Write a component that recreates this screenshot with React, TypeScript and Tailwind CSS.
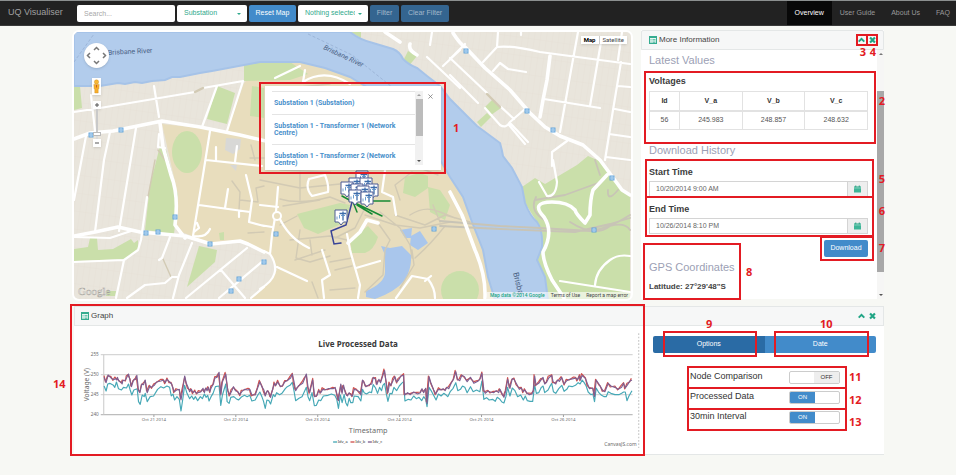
import React, { useState } from "react";

const RIVER =
  "M74 32 L350 32 Q360 40 373 43 L393 49 Q400 52 403 59 Q409 65 417 68 L427 76 L440 86 L450 99 L462 111 L477 126 L500 143 Q502 150 503 156 L512 168 L522 187 L525 203 Q530 216 537 222 Q543 230 542 247 L537 260 L545 277 L548 300 L495 300 L488 277 L483 250 L472 222 L463 197 L450 177 L442 163 L425 140 L400 112 L380 95 L365 86 L350 77 L325 68 L300 62 L275 62 L260 62 L244 65 L228 68 L212 71 L200 73 L190 75 L180 77 L172 77 L165 80 L152 81 L142 83 L135 82 L125 84 L118 83 L100 86 L74 86 Z";

const PARKS = [
  "M74 86 L80 86 L82 108 L74 110 Z",
  "M217 86 L235 93 L227 124 L207 119 Z",
  "M244 65 L262 62 L290 62 L308 74 L290 80 L244 81 Z",
  "M252 86 L264 88 L264 118 L250 116 Z",
  "M160 146 L166 150 L178 195 L174 234 L145 230 L150 185 Z",
  "M74 249 L88 247 L90 238 L97 238 L98 250 L113 249 L131 239 L134 243 L138 240 L138 250 L125 259 L74 261 Z",
  "M199 246 L217 250 L215 262 L187 287 Z",
  "M219 233 L224 232 L224 240 L220 240 Z",
  "M106 291 L116 291 L115 296 L106 296 Z",
  "M297 214 L340 203 L350 205 L346 222 L318 234 L304 228 Z",
  "M350 240 L368 226 L378 237 Q374 250 365 253 L352 253 Z",
  "M405 177 L420 173 L428 176 L428 188 L415 197 L403 193 Z",
  "M428 187 L440 190 L450 205 L445 220 L430 212 Z",
  "M522 187 L535 178 L545 184 L577 165 L588 156 L602 162 L612 180 L630 195 L630 299 L548 299 L545 277 L537 260 L542 247 L542 233 L537 222 L525 203 Z",
  "M493 99 L501 108 L491 115 L484 108 Z",
  "M477 122 L487 113 L491 117 L481 127 Z",
  "M401 65 L408 51 L417 56 L408 67 Z",
  "M350 32 L361 32 L361 38 Z",
];

const PATHS =
  "M297 216 L280 225 M280 199 Q300 205 330 197 L345 203 M283 206 L320 200 M300 165 L300 200 M260 180 L300 188 L340 184 M290 240 L330 236 L347 240 M295 260 L325 250 M300 230 L296 258 L310 262 L330 256 M310 240 L312 255 M330 262 L352 258 M335 270 L352 266 M330 290 L355 288 M312 282 L318 298 M365 215 L395 225 L420 228 L450 222 M380 212 L400 228 L410 245 L412 258 M395 215 L425 225 L445 215 L470 222 M410 215 Q425 205 440 212 L455 218 M378 223 L390 240 L385 250 L383 275 L365 292 M412 250 L414 265 L400 288 M445 226 Q430 245 415 258 M433 205 L440 222 M382 165 L420 168 L438 175 M412 172 L395 185 L400 200 M365 208 L355 228 L335 238 M232 181 L240 192 L239 210 M240 200 L258 202 L256 188 L264 186 M248 233 L264 232 M250 158 L264 158 M251 145 L255 160 M148 197 L155 160 M165 160 L158 150 M163 259 L171 277 M270 90 L330 84 M270 110 L330 120 L380 110 M280 170 L330 172";

const HIGHWAYS =
  "M440 221 L500 226 L540 228 L590 231 Q610 228 630 215 M440 226 L500 229 L575 232 L610 224 L630 218 M535 200 L565 195 L598 183 M595 160 L600 175 M608 190 Q607 203 618 190 M536 197 Q528 212 548 222 M570 222 Q595 238 610 226 Q625 222 630 230";

const ROADS =
  "M74 112 L100 108 L195 92 M203 88 L243 81 M154 86 L159 117 M91 95 L95 131 M217 86 L202 127 M243 81 L227 131 M86 136 L74 200 M110 132 L104 160 L95 232 M136 128 L119 231 M159 134 L158 147 L165 148 M210 131 L203 175 L193 236 M206 160 L262 166 M216 147 L216 160 M237 146 L235 162 M147 197 L141 240 L138 250 L124 260 L116 298 M74 262 L124 260 M74 237 L110 238 L131 231 M170 237 L162 258 L159 260 M192 243 L179 275 L173 298 M127 298 L145 285 L165 283 L172 277 L177 277 M247 248 L186 298 M264 260 L219 298 M264 287 L251 298 M221 270 L245 298 M199 205 L250 212 M228 189 L225 208 M239 212 L239 217 M210 229 Q206 238 194 236 M197 223 L199 228 L194 232 M246 175 L252 200 L249 222 L264 226 M260 205 L278 207 M278 187 L276 212 L272 235 L270 254 M278 215 Q288 238 309 248 M260 225 L272 227 M264 251 L270 254 Q284 275 260 289 M277 267 L307 281 M309 179 L325 175 Q329 185 328 192 L312 196 Q305 188 309 179 M322 250 L330 275 L322 280 L324 298 M347 234 L350 250 L360 285 L358 298 M356 268 L380 261 M386 163 L382 192 L393 197 L396 215 M396 298 L412 276 L428 279 Q435 288 435 298 M425 281 L431 276 M450 59 L465 44 M483 62 L497 47 Q510 45 540 52 L630 64 M497 47 L498 32 M450 58 L487 93 M450 75 L478 103 M485 108 L500 125 Q506 129 510 122 L525 109 M501 107 L514 119 M509 125 L525 144 M511 124 L528 142 M493 71 L500 63 L508 69 L526 72 M578 32 L572 65 L560 132 M544 99 L600 108 M601 42 L590 106 M621 62 L613 110 L605 160 M618 86 L630 87 M615 109 L630 112 M609 134 L630 137 M606 157 L630 160 M552 166 L552 152 L567 141 M618 60 L622 32 M427 57 L460 88 M443 66 L460 50 M432 32 L430 45 M521 32 L521 35 M553 160 L557 182 Q556 197 547 196 L539 182 M560 281 L630 292 M595 285 Q596 270 610 260 Q618 254 630 256 M275 78 L300 66 M305 70 L303 82 Q325 68 350 84";

const MAIN_ROADS =
  "M74 139 L90 133 L113 131 L162 121 L200 127 L240 135 L270 142 M160 123 L163 147 L171 175 Q179 195 175 225 L185 238 M74 236 L95 232 L118 227 L140 232 L185 236 L211 244 L240 241 L248 244 L264 252 M385 32 L400 42 M410 44 Q408 50 417 55 M453 33 Q460 44 465 47 L485 68 L510 90 L530 113 L545 127 L560 136 L583 145 L600 160 L622 190 L630 195 M550 56 L547 80 L543 100 L540 117 M607 175 L593 190 Q590 200 590 215 L585 223 Q576 214 575 210 Q568 202 552 202 Q530 202 544 217 Q554 232 543 252 Q543 262 552 280 L564 298 M450 192 L462 215 L475 250 Q486 275 485 298 M348 243 L360 232 L367 220 L378 223";

const STOPS = [
  [91, 135], [121, 130], [175, 217], [146, 233], [158, 232], [210, 244], [239, 279], [231, 291],
  [276, 234], [264, 262], [434, 229], [466, 51], [527, 111], [553, 130], [612, 178], [594, 230],
];

const MARKERS = [
  [362, 177], [355, 184], [347, 188], [366, 184], [357, 190], [372, 190], [363, 192], [355, 196], [367, 198], [341, 216],
];

function MapCanvas() {
  return (
    <svg
      viewBox="74 32 557 267"
      preserveAspectRatio="none"
      className="block h-full w-full"
      role="img"
      aria-label="Campus map"
    >
      <defs>
        <pattern id="lots" width="6" height="18" patternUnits="userSpaceOnUse" patternTransform="rotate(8)">
          <path d="M0 0V18M0 0H6" stroke="#e2ded4" strokeWidth="0.6" fill="none" />
        </pattern>
      </defs>
      <rect x="74" y="32" width="557" height="267" fill="#e9e5dc" />
      <rect x="74" y="32" width="557" height="267" fill="url(#lots)" />
      <path
        d="M162 124 L227 131 L244 83 L264 62 L330 60 L460 150 L498 299 L249 299 L262 290 L277 270 L270 255 L246 242 L211 243 L176 230 L178 195 Z"
        fill="#e8ddbd"
      />
      {PARKS.map((d) => (
        <path key={d} d={d} fill="#cadfaa" />
      ))}
      <ellipse cx="187" cy="152" rx="15" ry="21" fill="#cadfaa" />
      <circle cx="460" cy="290" r="19" fill="#cadfaa" />
      <path d={RIVER} fill="#b2ccec" stroke="#a6c3e8" strokeWidth="2" />
      <path
        d="M381 246 L390 248 L402 246 L411 255 Q412 268 405 280 Q395 292 375 299 L366 297 L366 291 Q385 283 385 272 L385 255 Z M400 230 L412 228 L411 238 L405 238 Z M411 236 L420 231 L428 243 L418 250 L410 245 Z"
        fill="#a9c6ec"
      />
      <path d="M226 138 L241 139 L240 149 L233 154 L225 150 Z M230 165 L237 165 L236 171 Z" fill="#d8d8d6" />
      <path d="M74 62 L94 34 M308 34 L352 55 L392 87" stroke="#93acd0" strokeWidth="0.7" strokeDasharray="3 2" fill="none" />
      <g fill="none" strokeLinejoin="round" strokeLinecap="round">
        <path d={PATHS} stroke="#d2cab4" strokeWidth="1.4" />
        <path d={HIGHWAYS} stroke="#c8c4b6" strokeWidth="1.8" />
        <path d={ROADS} stroke="#ffffff" strokeWidth="2.2" />
        <path d={MAIN_ROADS} stroke="#ffffff" strokeWidth="3.6" />
        <circle cx="277" cy="216" r="4" stroke="#ffffff" strokeWidth="2" fill="#e8ddbd" />
        <path d="M195 92 L203 88 M487 94 L500 107" stroke="#d2cab4" strokeWidth="2.4" />
      </g>
      {STOPS.map(([x, y]) => (
        <g key={`${x}-${y}`}>
          <rect x={x - 2} y={y - 2} width="4" height="4" fill="#cfe4f7" stroke="#5a9fd8" strokeWidth="0.9" />
          <path d={`M${x - 1.4} ${y}H${x + 1.4}`} stroke="#5a9fd8" strokeWidth="0.8" />
        </g>
      ))}
      <g fontFamily='Roboto, "Noto Sans", sans-serif' fontSize="7" fill="#4b6285">
        <text x="108" y="55" transform="rotate(-3 108 55)">Brisbane River</text>
        <text x="323" y="49" transform="rotate(25 323 49)" fontStyle="italic">Brisbane River</text>
        <text x="513" y="273" transform="rotate(76 513 273)" fontSize="8">Brisba</text>
      </g>
      <g fill="none" strokeLinecap="round" strokeWidth="1.5">
        <path d="M342 196 L353 202 L382 216 M357 205 L372 214 M353 202 L357 212 M370 201 L390 201" stroke="#178a35" />
        <path d="M352 202 L346 225 L331 231 L334 244 L341 243" stroke="#3a4598" />
      </g>
      {MARKERS.map(([x, y]) => (
        <g key={`${x}-${y}`} transform={`translate(${x} ${y})`}>
          <path d="M-6 -6 H6 V6 H2.500 L0 9 L-2.500 6 H-6 Z" fill="#fff" stroke="#4c5b93" strokeWidth="1" strokeLinejoin="round" />
          <path d="M2 -4.500 V4.500 M-1.500 -2.500 H5" stroke="#3c6cab" strokeWidth="1.300" fill="none" />
          <path d="M0 -0.500 H4 M-1.500 -1 V2.500 M-4 0.500 V3.500" stroke="#5e93c8" strokeWidth="0.900" fill="none" />
        </g>
      ))}
      <text x="78" y="295" fontFamily='"Liberation Serif", serif' fontSize="11" fill="#f2f2f0" stroke="#a3a19a" strokeWidth="0.4">
        Google
      </text>
    </svg>
  );
}

/* Numbered call-out: a red frame with its number beside it */
function Callout({ n, frame, label }: { n: number; frame: string; label: string }) {
  return (
    <>
      <div className={`pointer-events-none absolute z-20 border-2 border-[#e31b23] ${frame}`} />
      <span
        className={`pointer-events-none absolute z-20 font-['Open_Sans','Noto_Sans',sans-serif] text-[11px] leading-[12px] font-bold text-[#e31b23] ${label}`}
      >
        {n}
      </span>
    </>
  );
}

function ListIcon() {
  return (
    <svg viewBox="0 0 8 8" className="h-[8px] w-[8px] shrink-0">
      <rect x="0.5" y="0.5" width="7" height="7" fill="#e6f6f1" stroke="#35ac90" />
      <path d="M0 1H8" stroke="#35ac90" strokeWidth="2" />
      <path d="M1.500 3.500H2.500M3.500 3.500H6.500M1.500 5H2.500M3.500 5H6.500M1.500 6.500H2.500M3.500 6.500H6.500" stroke="#35ac90" strokeWidth="0.7" />
    </svg>
  );
}

function PanelTools() {
  return (
    <div className="ml-auto flex items-center gap-[4px]">
      <button aria-label="Collapse" className="block">
        <svg viewBox="0 0 8 8" className="h-[8px] w-[7px]">
          <path d="M0.800 5.800 L4 2.600 L7.200 5.800" fill="none" stroke="#20a585" strokeWidth="2.200" />
        </svg>
      </button>
      <button aria-label="Close" className="block">
        <svg viewBox="0 0 8 8" className="h-[8px] w-[7px]">
          <path d="M1.200 1.200 L6.800 6.800 M6.800 1.200 L1.200 6.800" fill="none" stroke="#20a585" strokeWidth="2.500" />
        </svg>
      </button>
    </div>
  );
}

function PanelHeader({ title, className }: { title?: string; className: string }) {
  return (
    <header className={`flex h-[20px] items-center gap-[2px] border border-[#e4e7e7] bg-[#f6f7f7] ${className}`}>
      {title && <ListIcon />}
      {title && <h1 className="text-[8px] leading-[10px] text-[#444]">{title}</h1>}
      <PanelTools />
    </header>
  );
}

function NavSelect({ label, value, className }: { label: string; value: string; className: string }) {
  return (
    <div className={`relative ${className}`}>
      <select
        aria-label={label}
        className="h-[17px] w-full appearance-none overflow-hidden rounded-[2px] bg-white pr-[13px] pl-[7px] text-[7px] text-[#2fa98c]"
      >
        <option>{value}</option>
      </select>
      <span className="pointer-events-none absolute top-[8px] right-[6px] border-x-2 border-t-2 border-x-transparent border-t-[#2fa98c]" />
    </div>
  );
}

function Navbar() {
  const links = ["Overview", "User Guide", "About Us", "FAQ"];
  return (
    <nav className="flex h-[26px] items-stretch border-t border-b border-t-[#8c9090] border-b-[#3a3a3a] bg-[#222] text-[7px]">
      <a href="#home" className="flex w-[77px] items-center pl-[8px] text-[9px] text-[#a0a0a0]">UQ Visualiser</a>
      <form className="flex items-center gap-[2px]" onSubmit={(e) => e.preventDefault()}>
        <input
          aria-label="Search"
          placeholder="Search..."
          className="h-[17px] w-[98px] rounded-[2px] bg-white px-[7px] text-[7px] placeholder:text-[#a8a8a8]"
        />
        <NavSelect label="Node type" value="Substation" className="w-[70px]" />
        <button className="h-[17px] w-[47px] rounded-[2px] bg-[#428bca] text-white">Reset Map</button>
        <NavSelect label="Selected nodes" value="Nothing selected" className="w-[70px]" />
        <button className="h-[17px] w-[29px] rounded-[2px] bg-[#346590] text-[#a3b8ca]">Filter</button>
        <button className="h-[17px] w-[48px] rounded-[2px] bg-[#346590] text-[#a3b8ca]">Clear Filter</button>
      </form>
      <div className="ml-auto flex">
        {links.map((l, i) => (
          <a
            key={l}
            href={`#${l}`}
            className={`flex items-center px-[8px] last:pr-[6px] ${i === 0 ? "bg-[#080808] text-white" : "text-[#999]"}`}
          >
            {l}
          </a>
        ))}
      </div>
    </nav>
  );
}

function MapPopup() {
  const items = [
    "Substation 1 (Substation)",
    "Substation 1 - Transformer 1 (Network Centre)",
    "Substation 1 - Transformer 2 (Network Centre)",
  ];
  return (
    <div className="absolute top-[54px] left-[191px] flex h-[84px] w-[176px] items-start bg-white pt-[5px] pl-[7px] font-['Roboto',sans-serif] shadow">
      <ul className="h-[76px] flex-1 overflow-hidden">
        {items.map((t) => (
          <li key={t} className="border-t border-[#e4e4e4] px-[2px] pt-[8px] pb-[7px] text-[7px] leading-[7px] font-bold">
            <a href="#node" className="text-[#4a90cb]">{t}</a>
          </li>
        ))}
      </ul>
      <div className="flex h-[74px] w-[8px] flex-col items-center justify-between bg-[#f1f1f1] py-[3px]">
        <span className="border-x-2 border-b-2 border-x-transparent border-b-[#a0a0a0]" />
        <span className="mt-[3px] h-[37px] w-[7px] bg-[#bcbcbc]" />
        <span className="mt-auto border-x-2 border-t-2 border-x-transparent border-t-[#505050]" />
      </div>
      <button aria-label="Close popup" className="mr-[8px] ml-[5px] mt-[3px]">
        <svg viewBox="0 0 6 6" className="h-[5px] w-[5px]">
          <path d="M0.500 0.500 L5.500 5.500 M5.500 0.500 L0.500 5.500" stroke="#777" strokeWidth="0.900" />
        </svg>
      </button>
    </div>
  );
}

function MapControls() {
  return (
    <div className="absolute top-[11px] left-[10px] flex w-[25px] flex-col items-center">
      <button aria-label="Pan" className="h-[25px] w-[25px] rounded-full bg-white shadow">
        <svg viewBox="0 0 25 25" className="h-full w-full">
          <path d="M10 7 L12.500 4.500 L15 7 M10 18 L12.500 20.500 L15 18 M6 10 L3.500 12.500 L6 15 M19 10 L21.500 12.500 L19 15" fill="none" stroke="#777" strokeWidth="1.500" />
        </svg>
      </button>
      <button aria-label="Street view" className="mt-[10px] h-[17px] w-[9px] bg-white shadow">
        <svg viewBox="0 0 9 17" className="h-full w-full">
          <circle cx="4.500" cy="4" r="2.200" fill="#f7b733" stroke="#c98a24" strokeWidth="0.400" />
          <path d="M1.800 6.500H7.200L6.800 11H6.200V15H2.800V11H2.200Z" fill="#f7ae2a" stroke="#c98a24" strokeWidth="0.400" />
          <path d="M4.500 7V9.500" stroke="#c04a18" strokeWidth="0.800" />
        </svg>
      </button>
      <button aria-label="Zoom in" className="mt-[6px] h-[8px] w-[8px] bg-white shadow">
        <svg viewBox="0 0 8 8"><path d="M4 2V6M2 4H6" stroke="#555" /></svg>
      </button>
      <div className="flex h-[30px] w-[8px] flex-col items-center justify-end">
        <div className="w-[2px] flex-1 border border-[#c9c9c9] bg-white" />
        <div className="h-[4px] w-[8px] border border-[#bbb] bg-white" />
        <div className="h-[3px] w-[2px] bg-[#ddd]" />
      </div>
      <button aria-label="Zoom out" className="h-[8px] w-[8px] bg-white shadow">
        <svg viewBox="0 0 8 8"><path d="M2 4H6" stroke="#555" /></svg>
      </button>
    </div>
  );
}

function MapPanel() {
  return (
    <section className="relative mt-[1px] h-[267px] min-w-0 flex-1">
      <div className="h-full overflow-hidden rounded-[5px] ring-2 ring-white">
        <MapCanvas />
      </div>
      <MapControls />
      <div className="absolute top-[4px] right-[4px] flex h-[8px] bg-white font-['Roboto',sans-serif] text-[6px] leading-[8px] text-[#444] shadow">
        <button className="border-r border-[#ccc] px-[3px] font-bold text-black">Map</button>
        <button className="px-[3px]">Satellite</button>
      </div>
      <div className="absolute right-0 bottom-0 flex h-[7px] gap-[6px] bg-white/60 px-[3px] font-['Roboto',sans-serif] text-[5px] leading-[7px] text-[#444]">
        <a href="#data" className="font-medium text-[#20a585]">Map data ©2014 Google</a>
        <a href="#terms">Terms of Use</a>
        <a href="#report">Report a map error</a>
      </div>
      <MapPopup />
      <Callout n={1} frame="top-[50px] left-[185px] h-[92px] w-[187px]" label="top-[90px] left-[379px]" />
    </section>
  );
}

function DateField({ id, label, value, className }: { id: string; label: string; value: string; className: string }) {
  return (
    <div className={className}>
      <label htmlFor={id} className="block text-[9px] leading-[12px] font-bold text-[#3c3c3c]">{label}</label>
      <div className="mt-[3px] flex h-[16px] border border-[#d4d4d4]">
        <input id={id} defaultValue={value} className="min-w-0 flex-1 bg-white px-[6px] text-[7px] text-[#666]" />
        <button aria-label={`Pick ${label}`} className="flex w-[20px] items-center justify-center border-l border-[#d4d4d4] bg-[#eee]">
          <svg viewBox="0 0 8 8" className="h-[8px] w-[7px]">
            <path d="M0 1H8V8H0Z" fill="#3db597" />
            <path d="M0 2.800H8" stroke="#d9f0ea" strokeWidth="0.600" />
            <path d="M2 0V2M6 0V2" stroke="#249478" />
          </svg>
        </button>
      </div>
    </div>
  );
}

function InfoPanel() {
  const heading = "text-[11px] leading-[14px] text-[#9c9fb5]";
  return (
    <aside className="relative -mt-[1px] w-[243px] shrink-0 bg-white">
      <PanelHeader title="More Information" className="rounded-t-[2px] pr-[7px] pl-[7px]" />
      <div className="flex h-[249px]">
        <div className="min-w-0 flex-1 overflow-hidden pt-[3px] pr-[9px] pl-[8px]">
          <h2 className={heading}>Latest Values</h2>
          <h3 className="mt-[8px] text-[9px] leading-[12px] font-bold text-[#3c3c3c]">Voltages</h3>
          <table className="mt-[4px] w-full table-fixed border-collapse text-center text-[7px] text-[#555]">
            <colgroup>
              <col className="w-[30px]" />
              <col />
              <col />
              <col />
            </colgroup>
            <thead>
              <tr className="h-[19px] text-[#333]">
                {["Id", "V_a", "V_b", "V_c"].map((h) => (
                  <th key={h} className="border border-b-2 border-[#e2e2e2] p-0 font-bold">{h}</th>
                ))}
              </tr>
            </thead>
            <tbody>
              <tr className="h-[19px]">
                {["56", "245.983", "248.857", "248.632"].map((v) => (
                  <td key={v} className="border border-[#e2e2e2] p-0">{v}</td>
                ))}
              </tr>
            </tbody>
          </table>
          <h2 className={`mt-[13px] ${heading}`}>Download History</h2>
          <DateField id="start" label="Start Time" value="10/20/2014 9:00 AM" className="mt-[9px]" />
          <DateField id="end" label="End Time" value="10/26/2014 8:10 PM" className="mt-[6px]" />
          <button className="mt-[6px] ml-auto block h-[17px] w-[44px] rounded-[2px] bg-[#428bca] text-[7px] text-white">
            Download
          </button>
          <h2 className={`mt-[3px] ${heading}`}>GPS Coordinates</h2>
          <p className="mt-[8px] text-[8px] leading-[10px] font-bold text-[#444]">Latitude: 27°29'48"S</p>
        </div>
        <div className="flex w-[7px] flex-col items-center bg-[#f6f6f5] py-[3px]">
          <span className="border-x-2 border-b-2 border-x-transparent border-b-[#777]" />
          <span className="mt-[36px] h-[181px] w-[7px] bg-[#a8a8a8]" />
          <span className="mt-auto border-x-2 border-t-2 border-x-transparent border-t-[#555]" />
        </div>
      </div>
      <Callout n={3} frame="top-[4px] right-[16px] h-[12px] w-[12px]" label="top-[16px] right-[18px]" />
      <Callout n={4} frame="top-[4px] right-[6px] h-[12px] w-[12px]" label="top-[16px] right-[8px]" />
      <Callout n={2} frame="top-[41px] right-[8px] left-[3px] h-[73px]" label="top-[65px] right-[-1px]" />
      <Callout n={5} frame="top-[129px] right-[10px] left-[4px] h-[39px]" label="top-[143px] right-[-1px]" />
      <Callout n={6} frame="top-[166px] right-[10px] left-[4px] h-[41px]" label="top-[175px] right-[-1px]" />
      <Callout n={7} frame="top-[206px] right-[10px] h-[25px] w-[54px]" label="top-[212px] right-[-1px]" />
      <Callout n={8} frame="top-[213px] left-[2px] h-[57px] w-[98px]" label="top-[236px] left-[105px]" />
    </aside>
  );
}

const SERIES_C: number[][] = [
  [120,232],[126,248],[132,225],[140,233],[148,239],[154,236],[158,240],[160,232],[164,243],[170,246],[174,252],[176,242],[184,240],[188,232],[193,222],[198,243],[202,260],[208,240],[214,238],[218,226],[223,272],[227,278],[233,252],[238,254],[243,240],[249,278],[257,258],[262,262],[270,256],[277,246],[290,243],[298,240],[303,248],[308,238],[316,246],[322,252],[325,262],[330,275],[337,270],[345,268],[350,300],[355,270],[361,228],[366,250],[371,262],[376,275],[381,268],[386,278],[391,274],[398,280],[404,277],[409,276],[416,265],[420,278],[424,264],[428,272],[432,262],[436,275],[441,262],[447,252],[451,235],[458,232],[464,217],[469,285],[474,245],[484,222],[490,272],[496,285],[502,272],[507,260],[513,272],[520,275],[526,284],[532,275],[540,268],[550,270],[556,268],[562,285],[572,285],[580,262],[586,246],[592,260],[598,270],[602,288],[608,272],[613,278],[618,292],[625,264],[630,250],[634,256],[639,246],[648,260],[655,256],[660,246],[670,240],[678,234],[683,222],[688,245],[693,272],[701,258],[714,250],[719,238],[725,222],[730,262],[735,278],[744,240],[750,290],[757,286],[762,272],[768,278],[774,268],[780,270],[790,266],[806,266],[811,262],[816,280],[821,302],[828,252],[832,280],[836,255],[842,280],[848,288],[853,278],[858,285],[863,288],[868,268],[875,270],[885,276],[888,285],
  [893,240],[898,248],[903,260],[913,254],[921,252],[925,232],[932,238],[936,254],[942,238],[947,248],[954,226],[959,212],[964,250],[969,278],[974,250],[978,256],[985,240],[990,230],[995,246],[1001,240],[1008,228],[1016,226],[1019,285],[1028,278],[1036,284],[1046,276],[1058,282],[1066,278],[1071,266],[1076,278],[1082,265],[1086,310],[1092,230],[1098,250],[1106,270],[1112,282],[1120,268],[1128,270],[1134,266],[1140,272],[1145,262],[1151,266],[1158,250],[1166,236],[1172,215],[1177,238],[1184,242],[1190,226],[1198,230],[1206,245],[1216,232],[1226,250],[1238,244],[1245,236],[1250,220],[1256,270],[1260,280],[1268,273],[1276,276],[1286,278],[1293,272],[1300,278],[1304,268],[1310,280],[1316,292],[1322,270],[1327,238],[1334,265],[1341,236],[1346,238],[1354,252],[1362,268],[1368,264],[1374,275],[1379,270],[1384,278],[1392,284],[1400,282],[1404,270],[1408,228],[1412,255],[1420,250],[1428,238],[1433,232],[1438,252],[1444,246],[1450,234],[1459,226],[1463,245],[1471,252],[1476,240],[1482,244],[1489,232],[1496,252],[1504,242],[1513,238],[1524,236],[1532,234],[1536,240],[1542,228],[1545,240],[1550,226],[1560,236],[1566,252],[1572,266],[1582,264],[1587,290],[1592,240],[1600,252],[1606,262],[1612,272],[1618,275],[1628,250],[1636,258],[1648,262],[1658,268],[1668,262],[1674,250],[1679,264],[1686,254],[1692,244],[1699,240],
];

const SERIES_A: number[][] = [
  [120,258],[126,273],[131,252],[137,250],[148,256],[152,262],[157,246],[163,266],[172,270],[178,262],[187,264],[193,252],[198,270],[203,285],[209,270],[219,266],[223,305],[228,313],[234,285],[240,290],[243,280],[249,305],[258,290],[268,288],[280,268],[290,260],[298,264],[308,258],[316,262],[321,288],[326,282],[331,300],[338,290],[345,298],[350,333],[355,300],[361,256],[368,280],[376,296],[382,288],[388,298],[393,290],[400,302],[408,290],[414,296],[420,282],[425,292],[430,286],[434,303],[440,290],[446,280],[453,260],[464,258],[469,316],[474,285],[484,252],[488,305],[494,310],[499,292],[508,290],[515,296],[522,300],[532,290],[540,286],[548,290],[556,286],[562,303],[572,300],[580,285],[586,276],[592,290],[597,304],[602,325],[607,300],[613,302],[618,312],[626,284],[631,290],[636,278],[645,284],[652,280],[662,266],[668,260],[676,256],[683,247],[688,272],[693,302],[703,295],[712,290],[719,275],[725,262],[730,290],[735,302],[742,278],[749,317],[755,316],[762,300],[768,302],[776,288],[790,286],[800,282],[810,286],[816,298],[821,325],[827,285],[832,308],[838,284],[843,308],[848,318],[853,295],[858,308],[864,308],[868,288],[880,290],[888,303],
  [893,268],[898,278],[905,282],[914,276],[920,278],[925,254],[932,264],[938,280],[944,262],[950,272],[954,256],[959,250],[964,280],[969,304],[975,280],[981,282],[987,262],[995,272],[1003,258],[1010,250],[1016,245],[1020,303],[1030,298],[1038,300],[1046,288],[1054,296],[1062,292],[1070,302],[1076,290],[1082,298],[1086,320],[1092,262],[1100,275],[1108,290],[1113,300],[1120,282],[1128,288],[1136,280],[1144,286],[1148,290],[1156,274],[1164,265],[1172,248],[1178,272],[1186,268],[1192,258],[1199,262],[1206,278],[1216,260],[1224,275],[1234,270],[1244,275],[1250,243],[1256,298],[1264,293],[1272,300],[1282,298],[1290,304],[1296,292],[1304,298],[1310,306],[1316,309],[1322,290],[1327,262],[1334,288],[1341,264],[1349,272],[1357,290],[1366,285],[1374,300],[1380,288],[1386,302],[1394,304],[1402,304],[1408,255],[1413,280],[1420,278],[1428,262],[1433,258],[1438,278],[1448,270],[1453,260],[1459,250],[1464,275],[1471,280],[1480,266],[1489,256],[1496,274],[1504,268],[1510,258],[1520,260],[1530,256],[1538,248],[1544,252],[1550,240],[1556,248],[1562,258],[1568,276],[1576,284],[1582,282],[1587,305],[1592,264],[1600,278],[1608,286],[1616,290],[1622,290],[1628,275],[1636,280],[1648,284],[1660,284],[1668,280],[1674,276],[1679,276],[1684,302],[1690,288],[1699,272],
];

const toPoints = (pts: number[][]) => pts.map((p) => p.join(",")).join(" ");

const SERIES_B = SERIES_C.map(([x, y], i) => [x + (i % 3 === 0 ? 0 : -2), y + [-5, -2, 3, -4, 2][i % 5]]);

function Chart() {
  const days = [
    [269, "Oct 21 2014"], [514, "Oct 22 2014"], [759, "Oct 23 2014"],
    [1004, "Oct 24 2014"], [1249, "Oct 25 2014"], [1494, "Oct 26 2014"],
  ] as const;
  return (
    <svg
      viewBox="30 78 1702 384"
      preserveAspectRatio="none"
      className="block h-[128px] w-full"
      role="img"
      aria-label="Live Processed Data"
      fontFamily='"Noto Sans", "Open Sans", sans-serif'
      fill="#6b6b6b"
    >
      <text x="880" y="142" fontSize="24" fontWeight="700" fill="#3a3a3a" textAnchor="middle">Live Processed Data</text>
      {[164, 224, 284, 344].map((y, i) => (
        <g key={y}>
          <path d={`M110 ${y}H1701`} stroke={i === 3 ? "#bdbdbd" : "#d6d6d6"} strokeWidth="4" />
          <text x="104" y={y + 5} fontSize="14" textAnchor="end">{255 - i * 5}</text>
        </g>
      ))}
      <path d="M119 164V344" stroke="#c8c8c8" strokeWidth="3" />
      {days.map(([x, label]) => (
        <g key={label}>
          <path d={`M${x} 344V351`} stroke="#a0a0a0" strokeWidth="3" />
          <text x={x} y="364" fontSize="13" textAnchor="middle">{label}</text>
        </g>
      ))}
      <text x="74" y="254" fontSize="20" textAnchor="middle" transform="rotate(-90 74 254)">Voltage (V)</text>
      <text x="910" y="398" fontSize="22" textAnchor="middle">Timestamp</text>
      <g fill="none" strokeLinejoin="round">
        <polyline points={toPoints(SERIES_A)} stroke="#46a8b6" strokeWidth="3.500" />
        <polyline points={toPoints(SERIES_B)} stroke="#d0504d" strokeWidth="3.500" />
        <polyline points={toPoints(SERIES_C)} stroke="#7d5f92" strokeWidth="3.500" />
      </g>
      {[
        [805, "#46a8b6", "Idv_a"], [857, "#d0504d", "Idv_b"], [909, "#7d5f92", "Idv_c"],
      ].map(([x, c, t]) => (
        <g key={t as string}>
          <path d={`M${x} 426h12`} stroke={c as string} strokeWidth="4" />
          <text x={(x as number) + 14} y="430" fontSize="12" fill="#333">{t}</text>
        </g>
      ))}
      <text x="1713" y="437" fontSize="15" textAnchor="end">CanvasJS.com</text>
      <path d="M1719 100V444" stroke="#cfcfcf" strokeWidth="4" strokeDasharray="5 5" />
    </svg>
  );
}

function Toggle({ label, initial }: { label: string; initial: boolean }) {
  const [on, setOn] = useState(initial);
  return (
    <label className="flex h-[20px] items-center justify-between pr-[6px] pl-[3px] text-[9px] text-[#333]">
      {label}
      <span className="relative flex h-[13px] w-[51px] overflow-hidden rounded-[2px] border border-[#ccc] bg-white text-[6px] leading-[11px]">
        <input
          type="checkbox"
          checked={on}
          onChange={() => setOn(!on)}
          className="absolute inset-0 h-full w-full cursor-pointer opacity-0"
        />
        {on && <span className="w-[25px] bg-[#428bca] text-center text-white">ON</span>}
        {!on && <span className="ml-auto w-[25px] bg-[#eee] text-center text-[#333]">OFF</span>}
      </span>
    </label>
  );
}

function OptionsPane() {
  return (
    <div className="relative w-[241px] shrink-0 pt-[10px] pr-[8px] pl-[10px]">
      <div className="flex h-[17px] overflow-hidden rounded-[2px] text-[7px] text-white">
        <button className="flex-1 bg-[#2a6ba5]">Options</button>
        <button className="flex-1 bg-[#428bca]">Date</button>
      </div>
      <div className="mt-[14px] mr-[30px] ml-[34px]">
        <Toggle label="Node Comparison" initial={false} />
        <Toggle label="Processed Data" initial />
        <Toggle label="30min Interval" initial />
      </div>
      <Callout n={9} frame="top-[5px] left-[20px] h-[26px] w-[94px]" label="top-[-8px] left-[63px]" />
      <Callout n={10} frame="top-[5px] left-[131px] h-[26px] w-[95px]" label="top-[-8px] left-[177px]" />
      <Callout n={11} frame="top-[40px] left-[44px] h-[23px] w-[160px]" label="top-[45px] left-[206px]" />
      <Callout n={12} frame="top-[61px] left-[44px] h-[23px] w-[160px]" label="top-[68px] left-[206px]" />
      <Callout n={13} frame="top-[82px] left-[44px] h-[23px] w-[160px]" label="top-[90px] left-[206px]" />
    </div>
  );
}

export default function App() {
  return (
    <div className="min-h-screen bg-[#f7f8f4] font-['Liberation_Sans',Arial,sans-serif]">
      <Navbar />
      <main className="pt-[5px] pr-[72px] pl-[74px]">
        <div className="flex items-start gap-[10px]">
          <MapPanel />
          <InfoPanel />
        </div>
        <section className="relative mt-[7px] border-b border-[#e4e7e7] bg-white">
          <PanelHeader title="Graph" className="pr-[7px] pl-[6px]" />
          <div className="flex">
            <div className="min-w-0 flex-1">
              <Chart />
            </div>
            <OptionsPane />
          </div>
          <Callout n={14} frame="top-[-2px] right-[239px] left-[-4px] h-[152px]" label="top-[72px] left-[-21px]" />
        </section>
      </main>
    </div>
  );
}
